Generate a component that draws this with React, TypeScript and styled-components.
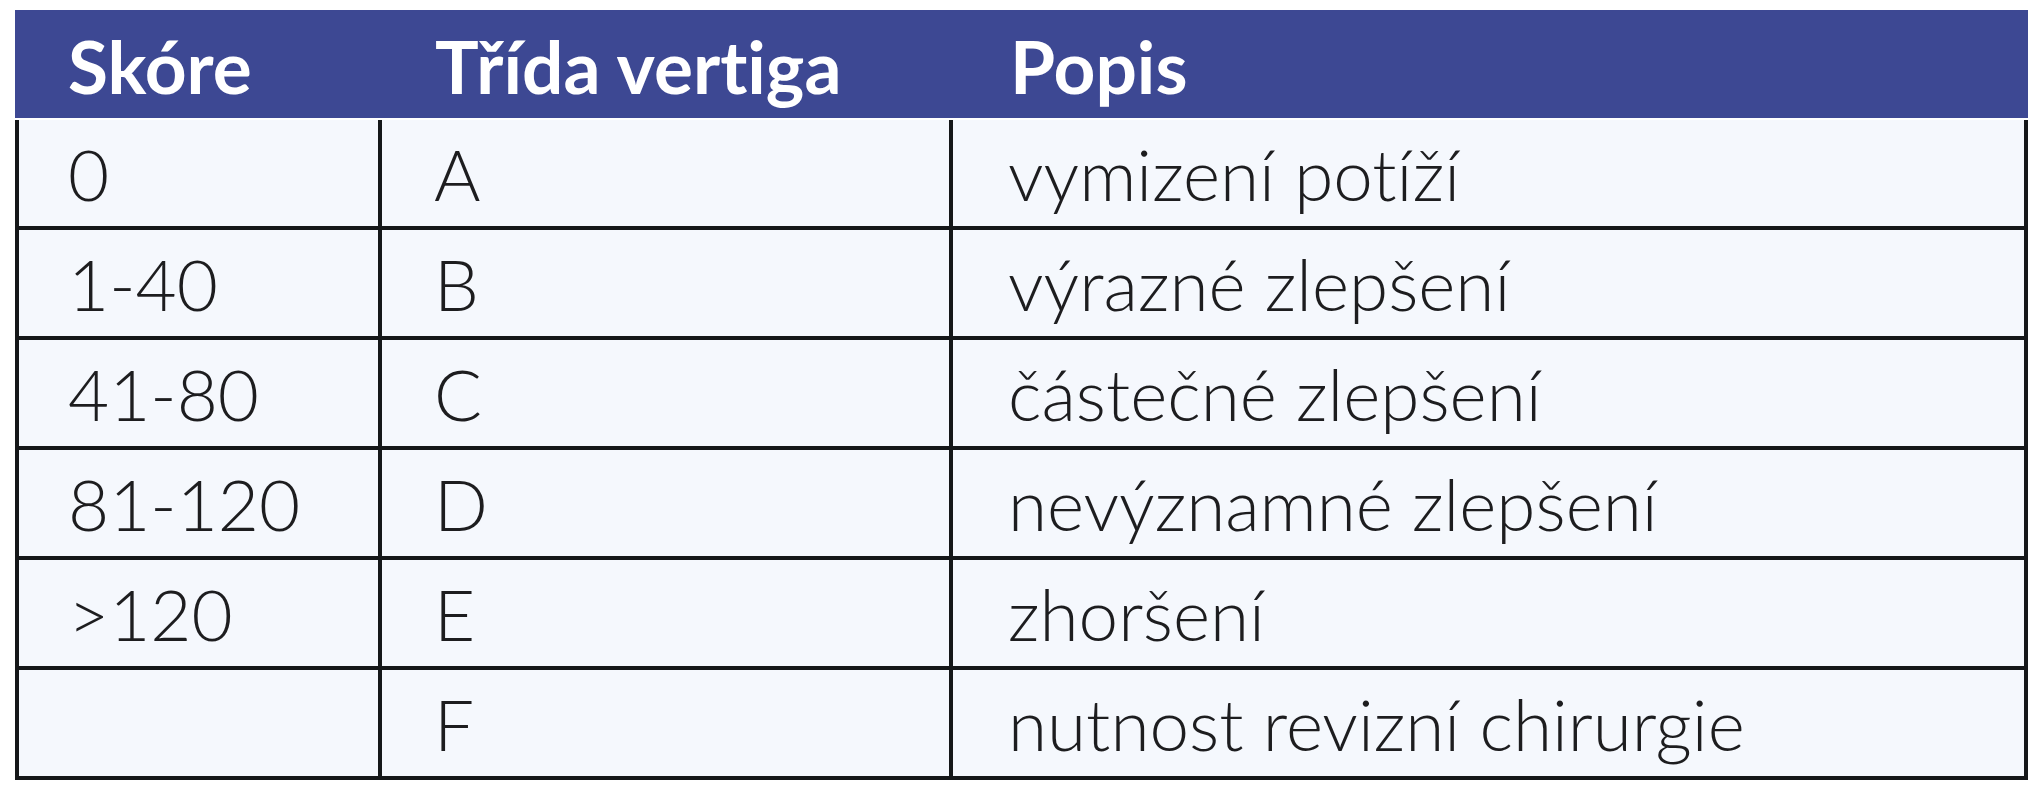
import React from "react";
import styled, { createGlobalStyle } from "styled-components";

const GlobalStyle = createGlobalStyle`
  html, body {
    margin: 0;
    padding: 0;
    background: #ffffff;
  }
`;

const Page = styled.div`
  padding: 10px 15px 0 15px;
  width: 2013px;
  font-family: Lato, "Open Sans", "Liberation Sans", sans-serif;
  font-variant-ligatures: none;
`;

const HeaderRow = styled.div`
  display: grid;
  grid-template-columns: 367px 571px 1fr;
  height: 108px;
  background: #3d4893;
  color: #ffffff;
  font-weight: 700;
  font-size: 73px;
  align-items: center;
`;

const HeaderCell = styled.div<{ $pad: number }>`
  padding-left: ${(p) => p.$pad}px;
  padding-top: 4px;
`;

const Body = styled.div`
  margin-top: 2px;
  background: #f5f8fd;
  border-left: 4px solid #151719;
  border-right: 4px solid #151719;
`;

const Row = styled.div`
  display: grid;
  grid-template-columns: 363px 571px 1fr;
  height: 110px;
  box-sizing: border-box;
  border-bottom: 4px solid #151719;
  color: #1d1d1f;
  font-size: 71px;
  font-weight: 300;
`;

const Cell = styled.div<{ $pad: number; $divider?: boolean }>`
  display: flex;
  align-items: center;
  padding-left: ${(p) => p.$pad}px;
  border-right: ${(p) => (p.$divider ? "4px solid #151719" : "none")};
`;

const rows: [string, string, string][] = [
  ["0", "A", "vymizení potíží"],
  ["1-40", "B", "výrazné zlepšení"],
  ["41-80", "C", "částečné zlepšení"],
  ["81-120", "D", "nevýznamné zlepšení"],
  [">120", "E", "zhoršení"],
  ["", "F", "nutnost revizní chirurgie"],
];

export default function App() {
  return (
    <>
      <GlobalStyle />
      <Page>
        <HeaderRow>
          <HeaderCell $pad={53}>Skóre</HeaderCell>
          <HeaderCell $pad={53}>Třída vertiga</HeaderCell>
          <HeaderCell $pad={57}>Popis</HeaderCell>
        </HeaderRow>
        <Body>
          {rows.map(([score, grade, desc], i) => (
            <Row key={i}>
              <Cell $pad={49} $divider>{score}</Cell>
              <Cell $pad={52} $divider>{grade}</Cell>
              <Cell $pad={55}>{desc}</Cell>
            </Row>
          ))}
        </Body>
      </Page>
    </>
  );
}
